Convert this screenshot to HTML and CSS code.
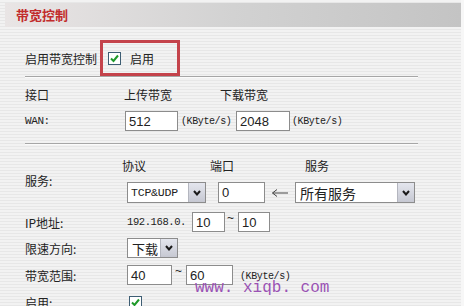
FILE: index.html
```
<!DOCTYPE html>
<html>
<head>
<meta charset="utf-8">
<link rel="stylesheet" href="styles.css">
</head>
<body>
<div class="page">
  <div class="header"><span class="title">带宽控制</span></div>
  <div class="content">
    <div class="row1">
      <span class="lbl1">启用带宽控制</span>
      <div class="redbox">
        <span class="cb"><svg width="11" height="11" viewBox="0 0 11 11"><path d="M2 5.5 L4.5 8 L9 2.5" fill="none" stroke="#1f9a2a" stroke-width="2"/></svg></span>
        <span>启用</span>
      </div>
    </div>
    <div class="sep"></div>
    <div class="hdr">
      <span class="h-if">接口</span>
      <span class="h-up">上传带宽</span>
      <span>下载带宽</span>
    </div>
    <div class="wan">
      <span class="wan-lbl mono">WAN:</span>
      <div class="inp w53">512</div>
      <span class="unit mono u1">(KByte/s)</span>
      <div class="inp w54">2048</div>
      <span class="unit mono u2">(KByte/s)</span>
    </div>
    <div class="sep sep2"></div>
    <div class="svc">
      <div class="svc-label">服务:</div>
      <div class="svc-right">
        <div class="svc-hdr">
          <span class="sh1">协议</span>
          <span class="sh2">端口</span>
          <span>服务</span>
        </div>
        <div class="svc-ctl">
          <div class="sel w79"><span class="sel-txt mono12">TCP&amp;UDP</span><span class="sel-btn"><svg width="8" height="6" viewBox="0 0 8 6"><path d="M1 1 L4 4.5 L7 1" fill="none" stroke="#1a1a1a" stroke-width="2"/></svg></span></div>
          <div class="inp w47 port">0</div>
          <svg class="larrow" width="18" height="10" viewBox="0 0 18 10"><path d="M6 1.5 L1.5 5 L6 8.5 M1.5 5 H17" fill="none" stroke="#444" stroke-width="1"/></svg>
          <div class="sel w120"><span class="sel-txt big">所有服务</span><span class="sel-btn"><svg width="8" height="6" viewBox="0 0 8 6"><path d="M1 1 L4 4.5 L7 1" fill="none" stroke="#1a1a1a" stroke-width="2"/></svg></span></div>
        </div>
      </div>
    </div>
    <div class="row r-ip">
      <span class="lbl">IP地址:</span>
      <span class="mono ip">192.168.0.</span>
      <div class="inp w33">10</div>
      <span class="tilde">~</span>
      <div class="inp w32">10</div>
    </div>
    <div class="row r-dir">
      <span class="lbl">限速方向:</span>
      <div class="sel w51 h20"><span class="sel-txt">下载</span><span class="sel-btn"><svg width="8" height="6" viewBox="0 0 8 6"><path d="M1 1 L4 4.5 L7 1" fill="none" stroke="#1a1a1a" stroke-width="2"/></svg></span></div>
    </div>
    <div class="row r-bw">
      <span class="lbl">带宽范围:</span>
      <div class="inp w45">40</div>
      <span class="tilde t2">~</span>
      <div class="inp w47">60</div>
      <span class="unit mono u3">(KByte/s)</span>
    </div>
    <div class="row r-en">
      <span class="lbl">启用:</span>
      <span class="cb cb2"><svg width="11" height="11" viewBox="0 0 11 11"><path d="M2 5.5 L4.5 8 L9 2.5" fill="none" stroke="#1f9a2a" stroke-width="2"/></svg></span>
    </div>
  </div>
  <div class="watermark">www. xiqb. com</div>
</div>
</body>
</html>
```
FILE: styles.css
```
body {
  margin: 0;
  width: 464px;
  height: 306px;
  overflow: hidden;
  background: #f7f7f7;
  font-family: "Noto Sans CJK SC", sans-serif;
  font-size: 12px;
  color: #222;
}
.page {
  position: relative;
  width: 461px;
  height: 306px;
  box-sizing: border-box;
  padding-top: 3px;
  background: repeating-linear-gradient(to bottom, #f2f2f2 0, #f2f2f2 2px, #e7e7e7 2px, #e7e7e7 3px);
}
.header {
  margin-left: 5px;
  height: 24px;
  display: flex;
  align-items: center;
  padding-left: 11px;
  background: linear-gradient(to right, #e9e5e5, #d2d2d2 50%, #c4c4c4);
}
.title {
  color: #c22c2c;
  font-weight: bold;
  font-size: 13px;
  line-height: 14px;
}
.content {
  padding-left: 25px;
}
.mono {
  font-family: "Liberation Mono", monospace;
  font-size: 10px;
  letter-spacing: -0.4px;
}
.mono12 {
  font-family: "Liberation Mono", monospace;
  font-size: 11.5px;
  letter-spacing: -0.2px;
}
.row1 {
  display: flex;
  align-items: center;
  margin-top: 13px;
  height: 36px;
}
.lbl1 {
  width: 75px;
}
.redbox {
  width: 80px;
  height: 36px;
  box-sizing: border-box;
  border: 3px solid #c4434b;
  display: flex;
  align-items: center;
  padding-left: 5px;
  gap: 9px;
}
.cb {
  width: 13px;
  height: 13px;
  box-sizing: border-box;
  border: 1px solid #3d5d73;
  background: #fff;
  display: flex;
  align-items: center;
  justify-content: center;
}
.sep {
  width: 393px;
  height: 1px;
  background: #a6a6a6;
  border-bottom: 1px solid #fbfbfb;
}
.sep2 {
  margin-top: 12px;
}
.hdr {
  display: flex;
  margin-top: 10px;
  line-height: 14px;
}
.h-if { width: 99px; }
.h-up { width: 96px; }
.wan {
  display: flex;
  align-items: center;
  margin-top: 9px;
  height: 20px;
}
.wan-lbl {
  width: 100px;
  font-size: 11px;
}
.inp {
  height: 20px;
  box-sizing: border-box;
  border: 1px solid #8c8c8c;
  background: #fff;
  font-family: "Liberation Sans", sans-serif;
  font-size: 13px;
  padding-left: 3px;
  display: flex;
  align-items: center;
}
.w53 { width: 53px; }
.w54 { width: 54px; }
.w47 { width: 47px; }
.w33 { width: 33px; }
.w32 { width: 32px; }
.w45 { width: 45px; }
.u1 { width: 58px; padding-left: 3px; box-sizing: border-box; }
.u2 { padding-left: 2px; }
.u3 { padding-left: 7px; align-self: flex-start; margin-top: 6px; }
.svc {
  display: flex;
  margin-top: 14px;
}
.svc-label {
  width: 102px;
  display: flex;
  align-items: center;
  padding-bottom: 1px;
}
.svc-hdr {
  display: flex;
  line-height: 14px;
  margin-left: -5px;
}
.sh1 { width: 88px; }
.sh2 { width: 95px; }
.svc-ctl {
  display: flex;
  align-items: center;
  margin-top: 9px;
  height: 21px;
}
.sel {
  display: flex;
  height: 21px;
  box-sizing: border-box;
  border: 1px solid #8c8c8c;
  background: #fff;
}
.h20 { height: 20px; }
.w79 { width: 79px; }
.w120 { width: 120px; }
.w51 { width: 51px; }
.sel-txt {
  flex: 1;
  padding-left: 4px;
  display: flex;
  align-items: center;
  font-size: 13px;
}
.sel-txt.mono12 { padding-left: 3px; font-size: 11.5px; }
.sel-txt.big { font-size: 14px; }
.sel-btn {
  width: 16px;
  border-left: 1px solid #b4b6bf;
  background: linear-gradient(#e4e6ee, #c6c8d2);
  display: flex;
  align-items: center;
  justify-content: center;
}
.port {
  height: 21px;
  margin-left: 12px;
}
.larrow {
  margin-left: 6px;
  margin-right: 6px;
}
.row {
  display: flex;
  align-items: center;
  height: 20px;
}
.lbl { width: 102px; }
.r-ip { margin-top: 9px; }
.r-dir { margin-top: 6px; }
.r-bw { margin-top: 7px; }
.r-en { margin-top: 7px; }
.ip { width: 65px; font-size: 10.5px; }
.tilde {
  width: 13px;
  align-self: flex-start;
  line-height: 12px;
  font-family: "Liberation Sans", sans-serif;
  font-size: 12px;
  padding-left: 2px;
  box-sizing: border-box;
}
.t2 { width: 14px; padding-left: 3px; }
.cb2 { margin-left: 2px; }
.watermark {
  position: absolute;
  left: 195px;
  top: 279px;
  font-family: "Liberation Mono", monospace;
  font-size: 16px;
  color: #9a52b4;
  white-space: pre;
}
```
